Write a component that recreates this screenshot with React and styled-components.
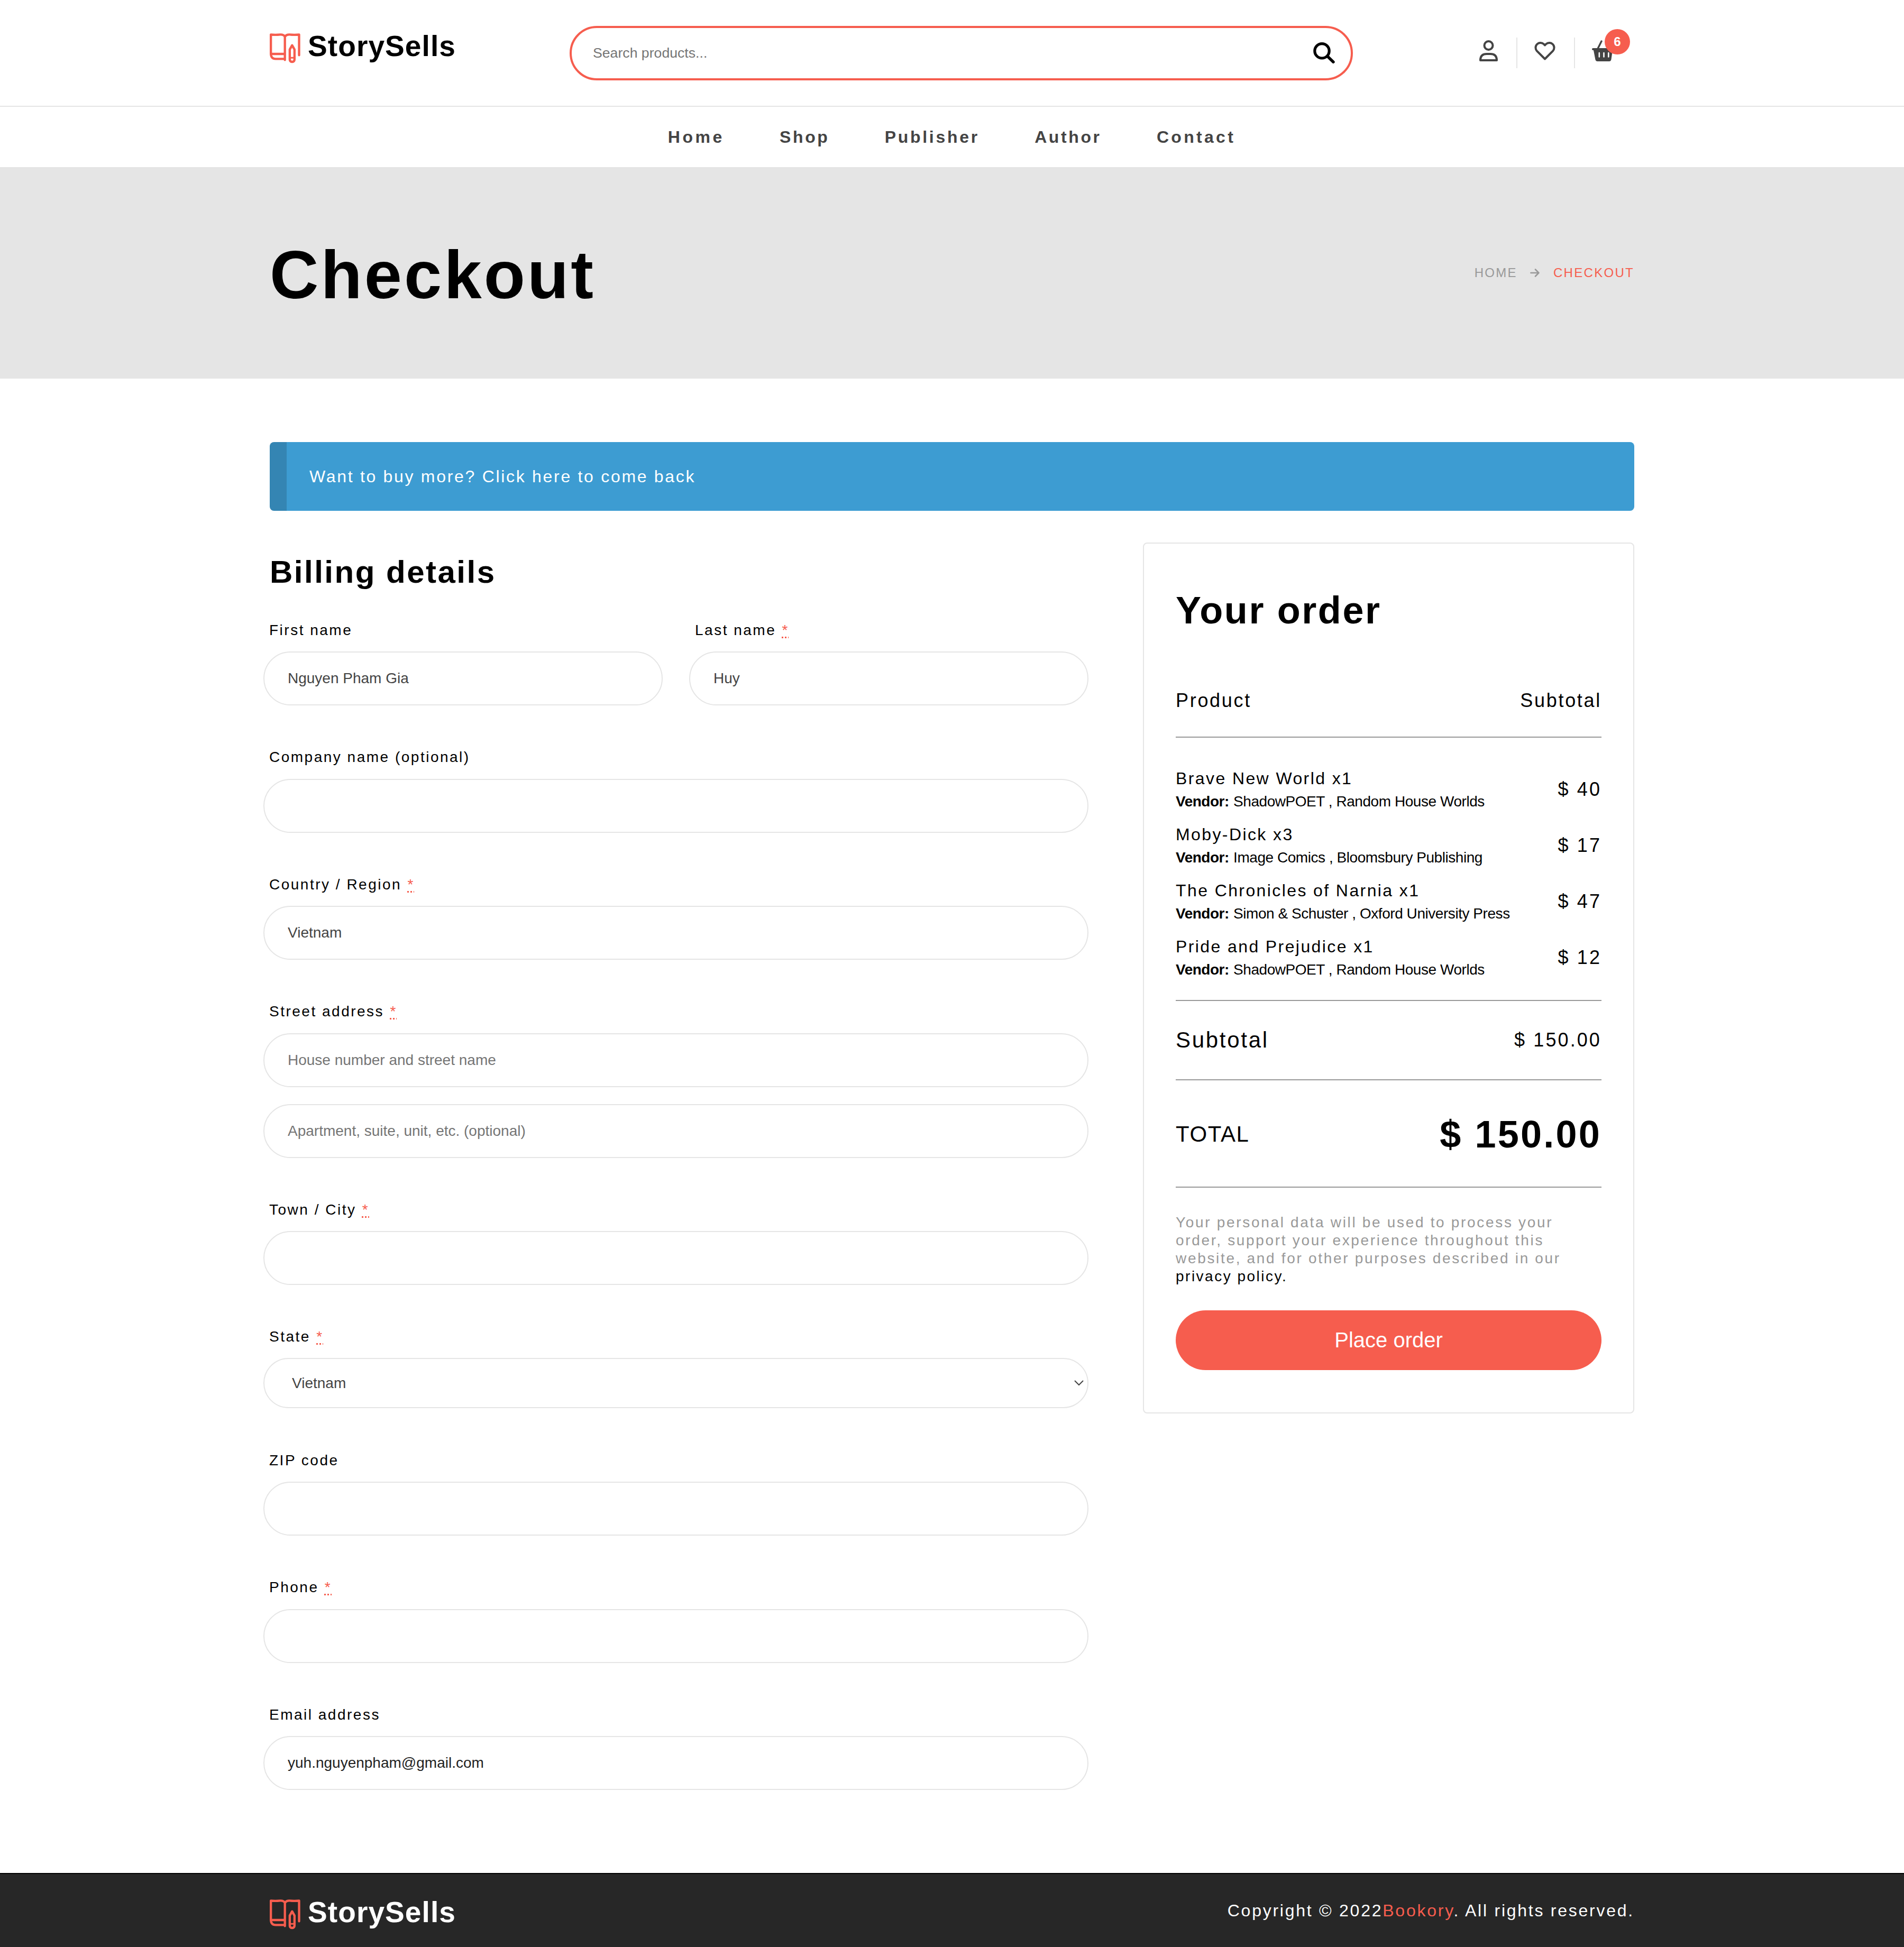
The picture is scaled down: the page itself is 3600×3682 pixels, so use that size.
import React from "react";
import styled, { createGlobalStyle } from "styled-components";

const coral = "#f65d4e";
const line = "#e5e5e5";
const ink = "#444444";

const GlobalStyle = createGlobalStyle`
  *, *::before, *::after { box-sizing: border-box; }
  body {
    margin: 0;
    background: #fff;
    color: #000;
    font-family: "Liberation Sans", Arial, Helvetica, sans-serif;
  }
  input, select, button { font-family: inherit; }
`;

const Container = styled.div`
  width: 2580px;
  margin: 0 auto;
  display: flex;
`;

/* ---------- header ---------- */

const Header = styled.header`
  height: 202px;
  border-bottom: 2px solid ${line};
`;

const HeaderRow = styled(Container)`
  height: 200px;
  align-items: flex-start;
`;

const LogoLink = styled.a`
  display: flex;
  align-items: flex-start;
  width: 567px;
  height: 60px;
  color: ${(p) => p.$color};
  svg { margin-top: 6px; flex: none; }
`;

const LogoName = styled.span`
  margin-left: 14px;
  font-size: 55px;
  line-height: 60px;
  font-weight: 700;
  letter-spacing: 1.1px;
`;

const HeaderLogo = styled.div`
  padding-top: 57px;
`;

const SearchBox = styled.form`
  display: flex;
  align-items: center;
  width: 1481px;
  height: 103px;
  margin-top: 49px;
  padding: 0 30px 1px 40px;
  border: 4px solid ${coral};
  border-radius: 52px;
`;

const SearchInput = styled.input`
  flex: 1;
  border: 0;
  padding: 0;
  outline: 0;
  background: transparent;
  font-size: 26.67px;
  &::placeholder { color: #757575; opacity: 1; }
`;

const HeaderTools = styled.div`
  display: flex;
  align-items: center;
  height: 58px;
  margin: 71px 39px 0 auto;
`;

const ToolIcon = styled.span`
  position: relative;
  display: flex;
  padding-bottom: 8px;
`;

const ToolDivider = styled.span`
  width: 2px;
  height: 58px;
  margin: 0 32px 0 35px;
  background: ${line};
`;

const Badge = styled.span`
  position: absolute;
  left: 24px;
  top: -21px;
  width: 48px;
  height: 48px;
  border-radius: 50%;
  background: ${coral};
  color: #fff;
  font-size: 24px;
  line-height: 48px;
  font-weight: 700;
  text-align: center;
`;

const Nav = styled.nav`
  display: flex;
  justify-content: center;
  align-items: center;
  gap: 104.3px;
  height: 114px;
  padding-right: 1px;
`;

const NavLink = styled.a`
  font-size: 32px;
  font-weight: 700;
  color: ${ink};
  letter-spacing: ${(p) => p.$spacing}px;
`;

/* ---------- hero ---------- */

const Hero = styled.section`
  height: 400px;
  background: ${line};
`;

const HeroRow = styled(Container)`
  height: 400px;
  align-items: center;
  justify-content: space-between;
`;

const HeroTitle = styled.h1`
  margin: 0;
  padding-top: 7px;
  font-size: 128px;
  line-height: 150px;
  letter-spacing: 4.1px;
`;

const Breadcrumb = styled.div`
  display: flex;
  align-items: center;
  font-size: 24px;
  letter-spacing: 2.3px;
  color: #999;
  svg { margin: 0 26px 0 24px; }
`;

const Current = styled.span`
  color: ${coral};
`;

/* ---------- main ---------- */

const Main = styled.main`
  width: 2580px;
  margin: 0 auto;
  padding: 120px 0 157px;
`;

const Notice = styled.div`
  display: flex;
  align-items: center;
  height: 130px;
  padding-left: 43px;
  border-left: 32px solid #3485b3;
  border-radius: 8px;
  background: #3d9cd2;
  color: #fff;
  font-size: 32px;
  letter-spacing: 2.7px;
`;

const Columns = styled.div`
  display: flex;
  justify-content: space-between;
  align-items: flex-start;
  margin-top: 60px;
`;

const Billing = styled.form`
  width: 1560px;
  margin-left: -12px;
  padding-top: 22px;
`;

const BillingTitle = styled.h3`
  margin: 0 0 58.5px;
  padding-left: 12px;
  font-size: 60px;
  line-height: 68px;
  letter-spacing: 2.5px;
`;

const Fields = styled.div`
  display: grid;
  grid-template-columns: 755px 755px;
  column-gap: 50px;
  row-gap: 81px;
`;

const FieldBox = styled.div`
  display: flex;
  flex-direction: column;
  grid-column: ${(p) => (p.$half ? "auto" : "1 / -1")};
`;

const Label = styled.label`
  padding-left: 11px;
  margin-bottom: 23.5px;
  font-size: 28px;
  line-height: 34px;
  letter-spacing: 2.5px;
`;

const Required = styled.abbr`
  margin-left: 1px;
  color: ${coral};
  text-decoration: underline dotted 3px;
  text-underline-offset: 3px;
`;

const Input = styled.input`
  width: 100%;
  height: 102px;
  margin-top: ${(p) => (p.$stacked ? 32 : 0)}px;
  padding: 0 44px;
  border: 2px solid ${line};
  border-radius: 51px;
  background: #fff;
  color: ${(p) => p.$color || ink};
  font-size: 28px;
  outline: 0;
  &::placeholder { color: #757575; opacity: 1; }
`;

const SelectBox = styled.div`
  display: flex;
  align-items: center;
  height: 95px;
  margin: -1px 0 1px;
  padding: 0 7px 0 52px;
  border: 2px solid ${line};
  border-radius: 48px;
`;

const Select = styled.select`
  flex: 1;
  appearance: none;
  border: 0;
  padding: 0;
  background: transparent;
  color: ${ink};
  font-size: 28px;
`;

/* ---------- order ---------- */

const Order = styled.aside`
  width: 929px;
  padding: 86px 60px 80px;
  border: 2px solid ${line};
  border-radius: 8px;
`;

const OrderTitle = styled.h2`
  margin: 0 0 109px;
  font-size: 72px;
  line-height: 80px;
  letter-spacing: 2.6px;
`;

const OrderRow = styled.div`
  display: flex;
  justify-content: space-between;
  align-items: center;
  height: ${(p) => p.$height}px;
  padding: ${(p) => p.$pad || "0"};
  border-bottom: 2px solid #999;
`;

const OrderText = styled.span`
  font-size: ${(p) => p.$size}px;
  line-height: 1.15;
  letter-spacing: ${(p) => p.$spacing}px;
  font-weight: ${(p) => (p.$bold ? 700 : 400)};
`;

const ItemList = styled.div`
  display: flex;
  flex-direction: column;
  gap: 18px;
  padding: 55px 0 35px;
  border-bottom: 2px solid #999;
`;

const Item = styled.div`
  display: flex;
  justify-content: space-between;
  align-items: center;
  height: 88px;
`;

const ItemName = styled.div`
  font-size: 32px;
  line-height: 44px;
  letter-spacing: 2.4px;
`;

const ItemVendor = styled.div`
  font-size: 28px;
  line-height: 44px;
  letter-spacing: -0.45px;
  b { letter-spacing: -0.5px; margin-right: 1px; }
`;

const ItemPrice = styled.div`
  padding-bottom: 3px;
  font-size: 36px;
  letter-spacing: 3.1px;
`;

const Privacy = styled.p`
  margin: 49px 0 47px;
  color: #999;
  font-size: 28px;
  line-height: 34px;
  letter-spacing: 2.68px;
  white-space: nowrap;
`;

const PrivacyLink = styled.a`
  color: #000;
  letter-spacing: 2.5px;
`;

const PlaceOrder = styled.button`
  display: block;
  width: 100%;
  height: 113px;
  padding: 0;
  border: 0;
  border-radius: 57px;
  background: ${coral};
  color: #fff;
  font-size: 40px;
`;

/* ---------- footer ---------- */

const Footer = styled.footer`
  height: 140px;
  border-top: 2px solid #000;
  background: #272727;
`;

const FooterRow = styled(Container)`
  height: 138px;
  align-items: center;
  justify-content: space-between;
`;

const FooterLogo = styled.div`
  padding-top: 6px;
`;

const Copyright = styled.div`
  color: #fff;
  font-size: 32px;
  letter-spacing: 2.75px;
`;

/* ---------- icons ---------- */

const BookIcon = () => (
  <svg width="58" height="57" viewBox="90 98 174 171" fill="none" stroke={coral} strokeWidth="13" strokeLinecap="round" strokeLinejoin="round">
    <path d="M176 249V116Q168 104 150 105Q120 108 96.500 105V212Q96 243 124 243H176" />
    <path d="M98 215H174" />
    <path d="M176 116Q186 104 202 105Q230 108 256.500 105V222" />
    <path d="M217 166L203.500 190V246Q203.500 260 217 260Q230.500 260 230.500 246V190Z" />
    <path d="M205 237H229" strokeWidth="9" />
  </svg>
);

const Logo = ({ color }) => (
  <LogoLink $color={color}>
    <BookIcon />
    <LogoName>StorySells</LogoName>
  </LogoLink>
);

const SearchIcon = () => (
  <svg width="41" height="40" viewBox="0 0 41 40" fill="none" stroke="#000" strokeLinecap="round">
    <circle cx="16.500" cy="16.300" r="13.700" strokeWidth="5.200" />
    <path d="M27 26.500L38 37.200" strokeWidth="5.400" />
  </svg>
);

const UserIcon = () => (
  <svg width="35" height="40" viewBox="0 0 35 40" fill="none" stroke={ink} strokeWidth="4" strokeLinejoin="round">
    <circle cx="17.500" cy="10" r="8" />
    <path d="M2 38V37Q2.500 26 14 26H21Q32.500 26 33 37V38Z" />
  </svg>
);

const HeartIcon = () => (
  <svg width="40" height="40" viewBox="0 0 40 40" fill="none" stroke={ink} strokeWidth="4" strokeLinejoin="round">
    <path d="M20 35.500L4.900 20.400A9.200 9.200 0 0 1 17.900 7.400L20 9.500L22.100 7.400A9.200 9.200 0 0 1 35.100 20.400Z" />
  </svg>
);

const BasketIcon = () => (
  <svg width="41" height="40" viewBox="0 0 41 40">
    <path d="M2 15H39Q41 15 41 17Q41 19 39 19L36.500 36Q36 40 32.500 40H10.500Q7 40 6.300 36L3 19Q0 19 0 17Q0 15 2 15Z" fill={ink} />
    <path d="M11 16L18 2M34 16L27 2" stroke={ink} strokeWidth="3.400" strokeLinecap="round" />
    <path d="M13.800 24V31.500M22.500 24V31.500M31.300 24V31.500" stroke="#fff" strokeWidth="2.600" strokeLinecap="round" />
  </svg>
);

const ArrowIcon = () => (
  <svg width="18" height="16" viewBox="0 0 18 16" fill="none" stroke="#999" strokeWidth="2.600" strokeLinecap="round" strokeLinejoin="round">
    <path d="M1.400 8H16.400M10 1.500L16.400 8L10 14.500" />
  </svg>
);

const ChevronIcon = () => (
  <svg width="18" height="11" viewBox="0 0 18 11" fill="none" stroke={ink} strokeWidth="2">
    <path d="M1 1L9 9L17 1" />
  </svg>
);

/* ---------- data ---------- */

const links = [
  ["Home", 4.5],
  ["Shop", 3.6],
  ["Publisher", 3.7],
  ["Author", 3.6],
  ["Contact", 4.3],
];

const items = [
  ["Brave New World x1", "ShadowPOET , Random House Worlds", "$ 40"],
  ["Moby-Dick x3", "Image Comics , Bloomsbury Publishing", "$ 17"],
  ["The Chronicles of Narnia x1", "Simon & Schuster , Oxford University Press", "$ 47"],
  ["Pride and Prejudice x1", "ShadowPOET , Random House Worlds", "$ 12"],
];

const Field = ({ label, required, half, children }) => (
  <FieldBox $half={half}>
    <Label>
      {label}
      {required && (
        <>
          {" "}
          <Required>*</Required>
        </>
      )}
    </Label>
    {children}
  </FieldBox>
);

export default function App() {
  return (
    <>
      <GlobalStyle />
      <Header>
        <HeaderRow>
          <HeaderLogo>
            <Logo color="#000" />
          </HeaderLogo>
          <SearchBox>
            <SearchInput placeholder="Search products..." />
            <SearchIcon />
          </SearchBox>
          <HeaderTools>
            <ToolIcon><UserIcon /></ToolIcon>
            <ToolDivider />
            <ToolIcon><HeartIcon /></ToolIcon>
            <ToolDivider />
            <ToolIcon>
              <BasketIcon />
              <Badge>6</Badge>
            </ToolIcon>
          </HeaderTools>
        </HeaderRow>
      </Header>
      <Nav>
        {links.map(([name, spacing]) => (
          <NavLink key={name} $spacing={spacing}>{name}</NavLink>
        ))}
      </Nav>
      <Hero>
        <HeroRow>
          <HeroTitle>Checkout</HeroTitle>
          <Breadcrumb>
            <span>HOME</span>
            <ArrowIcon />
            <Current>CHECKOUT</Current>
          </Breadcrumb>
        </HeroRow>
      </Hero>
      <Main>
        <Notice>Want to buy more? Click here to come back</Notice>
        <Columns>
          <Billing>
            <BillingTitle>Billing details</BillingTitle>
            <Fields>
              <Field label="First name" half><Input defaultValue="Nguyen Pham Gia" /></Field>
              <Field label="Last name" half required><Input defaultValue="Huy" /></Field>
              <Field label="Company name (optional)"><Input /></Field>
              <Field label="Country / Region" required><Input defaultValue="Vietnam" /></Field>
              <Field label="Street address" required>
                <Input placeholder="House number and street name" />
                <Input $stacked placeholder="Apartment, suite, unit, etc. (optional)" />
              </Field>
              <Field label="Town / City" required><Input /></Field>
              <Field label="State" required>
                <SelectBox>
                  <Select defaultValue="Vietnam">
                    <option>Vietnam</option>
                  </Select>
                  <ChevronIcon />
                </SelectBox>
              </Field>
              <Field label="ZIP code"><Input /></Field>
              <Field label="Phone" required><Input /></Field>
              <Field label="Email address"><Input $color="#222" defaultValue="yuh.nguyenpham@gmail.com" /></Field>
            </Fields>
          </Billing>
          <Order>
            <OrderTitle>Your order</OrderTitle>
            <OrderRow $height={92} $pad="0 0 47px">
              <OrderText $size={36} $spacing={2.7}>Product</OrderText>
              <OrderText $size={36} $spacing={2.7}>Subtotal</OrderText>
            </OrderRow>
            <ItemList>
              {items.map(([name, vendor, price]) => (
                <Item key={name}>
                  <div>
                    <ItemName>{name}</ItemName>
                    <ItemVendor><b>Vendor:</b> {vendor}</ItemVendor>
                  </div>
                  <ItemPrice>{price}</ItemPrice>
                </Item>
              ))}
            </ItemList>
            <OrderRow $height={150}>
              <OrderText $size={42} $spacing={2.7}>Subtotal</OrderText>
              <OrderText $size={36} $spacing={3.1}>$ 150.00</OrderText>
            </OrderRow>
            <OrderRow $height={203} $pad="4px 0 0">
              <OrderText $size={42} $spacing={1.6}>TOTAL</OrderText>
              <OrderText $size={72} $spacing={3.2} $bold>$ 150.00</OrderText>
            </OrderRow>
            <Privacy>
              Your personal data will be used to process your<br />
              order, support your experience throughout this<br />
              website, and for other purposes described in our<br />
              <PrivacyLink>privacy policy.</PrivacyLink>
            </Privacy>
            <PlaceOrder type="button">Place order</PlaceOrder>
          </Order>
        </Columns>
      </Main>
      <Footer>
        <FooterRow>
          <FooterLogo>
            <Logo color="#fff" />
          </FooterLogo>
          <Copyright>
            Copyright © 2022<Current>Bookory</Current>. All rights reserved.
          </Copyright>
        </FooterRow>
      </Footer>
    </>
  );
}
